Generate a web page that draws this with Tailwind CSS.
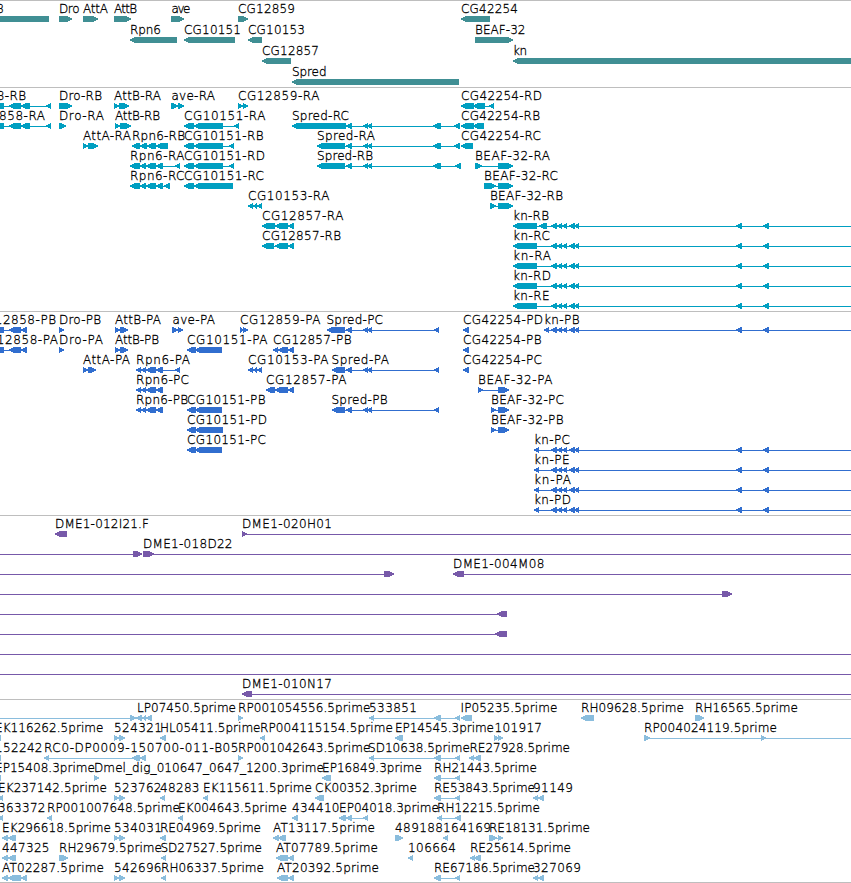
<!DOCTYPE html>
<html>
  <head>
    <title>Genome Browser</title>
    <meta charset="utf-8" />
    <meta name="viewport" content="width=device-width, initial-scale=1" />
    <script src="https://cdn.jsdelivr.net/npm/@tailwindcss/browser@4"></script>
  </head>
  <body class="bg-white overflow-hidden">
  <!-- Tracks -->
  <main class="flex flex-col w-[851px] font-['DejaVu_Sans_Light','DejaVu_Sans',sans-serif] font-extralight text-[12px] text-black border-b border-[#bebebe]">
    <section class="h-[87px] border-t border-[#bebebe]"><svg id="genes" class="block w-full h-full text-[#408f94]"></svg></section>
    <section class="h-[224px] border-t border-[#bebebe]"><svg id="transcripts" class="block w-full h-full text-[#009fc1]"></svg></section>
    <section class="h-[204px] border-t border-[#bebebe]"><svg id="proteins" class="block w-full h-full text-[#316ecf]"></svg></section>
    <section class="h-[184px] border-t border-[#bebebe]"><svg id="bacs" class="block w-full h-full text-[#7759a9]"></svg></section>
    <section class="h-[183px] border-t border-[#bebebe]"><svg id="ests" class="block w-full h-full text-[#8abddd]"></svg></section>
  </main>
  <script>
    // feature: [row, label, label start, label end, strand, "from-to" blocks]
    // a block ending in "~" is a plain connector
    const rd = "184-194 194-223 229-234";
    const spred = "346-352 363-368 367-372 433-441";
    const spredP = "346-352 363-368 367-372 434-439";
    const knTail = "551-557 557-562 562-567 569-575 574-579 736-742 763-769 769-860~";
    const est = "434-441 455-460";

    const genes = [
      [0, "CG12858", -52, 4, "<", "-30-49"],
      [0, "Dro", 59, 79.5, ">", "59-72"],
      [0, "AttA", 83, 108, ">", "83-98"],
      [0, "AttB", 114, 137, ">", "114-131"],
      [0, "ave", 171.5, 190.5, ">", "171-184"],
      [0, "CG12859", 238, 295, ">", "238-248"],
      [0, "CG42254", 461, 518, "<", "461-490"],
      [1, "Rpn6", 130, 161, "<", "130-177"],
      [1, "CG10151", 184, 241, "<", "184-235"],
      [1, "CG10153", 248, 305, "<", "248-262"],
      [1, "BEAF-32", 475, 525.5, ">", "475-513"],
      [2, "CG12857", 262, 319, "<", "262-291"],
      [2, "kn", 513, 527, "<", "513-860"],
      [3, "Spred", 292, 326.5, "<", "292-459"],
    ];

    const transcripts = [
      [0, "CG12858-RB", -54, 26, "<", "-9-4 9-21 21-30 46-51"],
      [0, "Dro-RB", 59, 102, ">", "59-72"],
      [0, "AttB-RA", 114, 161, ">", "114-119 119-129"],
      [0, "ave-RA", 171.5, 215, ">", "171-178 178-184"],
      [0, "CG12859-RA", 238, 319.5, ">", "238-243 243-248"],
      [0, "CG42254-RD", 461, 542, "<", "461-474 473-485 489-494"],
      [1, "CG12858-RA", -36, 45, "<", "-9-4 9-21 21-30 46-51"],
      [1, "Dro-RA", 59, 104, ">", "59-66"],
      [1, "AttB-RB", 115, 160, ">", "115-120 120-131"],
      [1, "CG10151-RA", 184, 265.5, "<", "184-194 194-223 234-239"],
      [1, "Spred-RC", 292, 349, "<", "292-346 " + spred + " 454-460"],
      [1, "CG42254-RB", 461, 540, "<", "461-474 473-484"],
      [2, "AttA-RA", 83, 131, ">", "83-88 88-98"],
      [2, "Rpn6-RB", 132, 185, "<", "132-140 140-147 147-156 156-168"],
      [2, "CG10151-RB", 184, 263.5, "<", rd],
      [2, "Spred-RA", 317, 375, "<", "317-345 " + spred + " 454-460"],
      [2, "CG42254-RC", 461, 541, "<", "461-473"],
      [3, "Rpn6-RA", 130, 184.5, "<", "130-140 140-146 146-156 156-163 175-180"],
      [3, "CG10151-RD", 184, 265, "<", rd],
      [3, "Spred-RB", 317, 373, "<", "317-345 " + spred + " 455-461"],
      [3, "BEAF-32-RA", 475, 550, ">", "475-482 498-513"],
      [4, "Rpn6-RC", 130, 184.5, "<", "130-140 140-146 146-156 156-163 164-170"],
      [4, "CG10151-RC", 184, 264, "<", "184-194 194-233"],
      [4, "BEAF-32-RC", 484, 558, ">", "484-496 498-513"],
      [5, "CG10153-RA", 248, 329.5, "<", "248-253 253-257 257-262"],
      [5, "BEAF-32-RB", 490, 563, ">", "490-496 498-513"],
      [6, "CG12857-RA", 262, 343.5, "<", "262-275 275-288 288-294"],
      [6, "kn-RB", 513, 549, "<", "513-537 539-547 " + knTail],
      [7, "CG12857-RB", 262, 341, "<", "262-274 275-288 288-294"],
      [7, "kn-RC", 513, 550, "<", "513-537 " + knTail],
      [8, "kn-RA", 513, 551, "<", "513-537 " + knTail],
      [9, "kn-RD", 513, 551, "<", "513-537 " + knTail],
      [10, "kn-RE", 513, 549.5, "<", "513-537 " + knTail],
    ];

    const proteins = [
      [0, "CG12858-PB", -24, 56, "<", "-9-4 9-21 21-27"],
      [0, "Dro-PB", 59, 101, ">", "59-64"],
      [0, "AttB-PA", 115, 161, ">", "115-120 120-128"],
      [0, "ave-PA", 172.5, 215, ">", "172-178 178-183"],
      [0, "CG12859-PA", 240, 320.5, ">", "240-244 243-248"],
      [0, "Spred-PC", 326.5, 383, "<", "327-345 " + spredP],
      [0, "CG42254-PD", 463, 543, "<", "463-469"],
      [0, "kn-PB", 544, 579.5, "<", "544-549 " + knTail],
      [1, "CG12858-PA", -22, 58, "<", "-9-4 9-21 21-27"],
      [1, "Dro-PA", 59, 103, ">", "59-64"],
      [1, "AttB-PB", 115, 159, ">", "115-120 120-128"],
      [1, "CG10151-PA", 187, 267.5, "<", "187-196 195-222"],
      [1, "CG12857-PB", 273, 351.5, "<", "273-278 278-288 288-294"],
      [1, "CG42254-PB", 463, 541.5, "<", "463-469"],
      [2, "AttA-PA", 83, 130, ">", "83-88 88-96"],
      [2, "Rpn6-PA", 136, 190, "<", "136-141 141-146 146-156 156-163 175-180"],
      [2, "CG10153-PA", 248, 328.5, "<", "248-253 253-257 257-262"],
      [2, "Spred-PA", 331.5, 389, "<", "332-345 " + spredP],
      [2, "CG42254-PC", 463, 542, "<", "463-469"],
      [3, "Rpn6-PC", 136, 189, "<", "136-141 141-146 146-156 156-163"],
      [3, "CG12857-PA", 266, 346.5, "<", "266-275 275-288 288-294"],
      [3, "BEAF-32-PA", 478, 552.5, ">", "478-483 498-509"],
      [4, "Rpn6-PB", 136, 188, "<", "136-141 141-146 146-156 156-163"],
      [4, "CG10151-PB", 187, 265.5, "<", "187-196 195-222"],
      [4, "Spred-PB", 331.5, 387.5, "<", "332-345 " + spredP],
      [4, "BEAF-32-PC", 491, 564, ">", "491-496 498-509"],
      [5, "CG10151-PD", 187, 267, "<", "187-196 195-223"],
      [5, "BEAF-32-PB", 491, 563.5, ">", "491-496 498-509"],
      [6, "CG10151-PC", 187, 266, "<", "187-196 195-222"],
      [6, "kn-PC", 534, 570, "<", "534-539 " + knTail],
      [7, "kn-PE", 534, 569.5, "<", "534-539 " + knTail],
      [8, "kn-PA", 534, 571, "<", "534-539 " + knTail],
      [9, "kn-PD", 534, 571, "<", "534-539 " + knTail],
    ];

    const bacs = [
      [0, "DME1-012I21.F", 55, 149, "<", "55-67"],
      [0, "DME1-020H01", 242, 332, ">", "242-247 247-860~"],
      [1, "", 0, 0, ">", "-9-133~ 133-142"],
      [1, "DME1-018D22", 143, 232.5, ">", "143-154 154-860~"],
      [2, "", 0, 0, ">", "-9-384~ 384-394"],
      [2, "DME1-004M08", 453, 544.5, "<", "453-464 464-860~"],
      [3, "", 0, 0, ">", "-9-722~ 722-732"],
      [4, "", 0, 0, "<", "-9-497~ 497-507"],
      [5, "", 0, 0, "<", "-9-495~ 495-507"],
      [6, "", 0, 0, ">", "-9-860~"],
      [7, "", 0, 0, ">", "-9-860~"],
      [8, "DME1-010N17", 242, 332, "<", "242-252 252-860~"],
    ];

    const ests = [
      [0, "", 0, 0, ">", "-9-130~ 130-136"],
      [0, "LP07450.5prime", 137, 236, "<", "136-142 142-146 146-152"],
      [0, "RP001054556.5prime", 238, 370.5, ">", "238-243"],
      [0, "533851", 369, 417, "<", "369-374 " + est],
      [0, "IP05235.5prime", 460.5, 557.5, "<", "461-472"],
      [0, "RH09628.5prime", 581, 684, "<", "581-594"],
      [0, "RH16565.5prime", 695, 798, ">", "695-704"],
      [1, "EK116262.5prime", -5, 103.5, "<", "-4-1"],
      [1, "524321", 114, 162, ">", "114-119 119-125"],
      [1, "HL05411.5prime", 160, 260.5, "<", "160-166"],
      [1, "RP004115154.5prime", 260, 393, "<", "260-265"],
      [1, "EP14545.3prime", 395, 494, "<", "395-403"],
      [1, "101917", 494.5, 542, ">", "494-499 498-503"],
      [1, "RP004024119.5prime", 644, 777, ">", "644-650 761-766 766-860~"],
      [2, "152242", -5, 42.5, "<", "-4-1"],
      [2, "RC0-DP0009-150700-011-B05", 44, 238.5, "<", "44-49 132-140 140-146"],
      [2, "RP001042643.5prime", 238, 370.5, ">", "238-243"],
      [2, "SD10638.5prime", 368, 470, "<", "369-374 " + est],
      [2, "RE27928.5prime", 469.5, 570, "<", "469-474 474-481"],
      [3, "EP15408.3prime", -5, 95, "<", "-4-1"],
      [3, "Dmel_dig_010647_0647_1200.3prime", 94, 324, ">", "94-99"],
      [3, "EP16849.3prime", 322, 422, "<", "322-331"],
      [3, "RH21443.5prime", 434, 537, "<", est],
      [4, "EK237142.5prime", -2, 107, "<", "-2-3"],
      [4, "523762", 114, 161.5, ">", "114-119 119-125"],
      [4, "48283", 160, 199.5, "<", "160-165"],
      [4, "EK115611.5prime", 203, 312, "<", "203-208"],
      [4, "CK00352.3prime", 315, 417, "<", "315-324"],
      [4, "RE53843.5prime", 434, 535, "<", est],
      [4, "91149", 533, 573, "<", "533-538 538-544"],
      [5, "363372", -2, 45.5, "<", "-2-3"],
      [5, "RP001007648.5prime", 47, 180, "<", "47-52"],
      [5, "EK004643.5prime", 178, 287, "<", "178-183"],
      [5, "434410", 292, 339.5, "<", "292-298"],
      [5, "EP04018.3prime", 339, 439, "<", "339-346 346-352 363-368"],
      [5, "RH12215.5prime", 437, 540, "<", "437-442 455-461"],
      [6, "EK296618.5prime", 2, 111, "<", "2-8 8-16"],
      [6, "534031", 114, 162, ">", "114-119 119-125"],
      [6, "RE04969.5prime", 160, 261, "<", "160-166"],
      [6, "AT13117.5prime", 273, 375, "<", "273-279 278-286"],
      [6, "489188", 395, 443, ">", "395-403"],
      [6, "164169", 443, 491, "<", "443-448"],
      [6, "RE18131.5prime", 489, 590, ">", "489-497 498-503"],
      [7, "447325", 2, 49.5, "<", "2-8 8-16"],
      [7, "RH29679.5prime", 59, 162, ">", "59-68"],
      [7, "SD27527.5prime", 160.5, 262, "<", "161-166"],
      [7, "AT07789.5prime", 276, 378, "<", "276-288 288-294"],
      [7, "106664", 408, 456, "<", "408-413"],
      [7, "RE25614.5prime", 470, 571, "<", "470-475 474-481"],
      [8, "AT02287.5prime", 2, 104, "<", "2-8 8-21 21-27"],
      [8, "542696", 114, 161.5, ">", "114-119 119-125"],
      [8, "RH06337.5prime", 161, 264, "<", "161-166"],
      [8, "AT20392.5prime", 277, 379, "<", "277-288 288-294"],
      [8, "RE67186.5prime", 434, 535, "<", est],
      [8, "327069", 533, 581, "<", "533-538 538-544"],
    ];

    function drawTrack(id, features, rowHeight) {
      let shapes = "";
      let labels = "";
      for (const [row, label, x1, x2, strand, blocks] of features) {
        const top = row * rowHeight + 15;
        const parts = blocks.split(" ").map((b) => b.match(/^(-?\d+)-(\d+)(~?)$/));
        const start = Number(parts[0][1]);
        const end = Number(parts[parts.length - 1][2]);
        if (parts.length > 1 || parts[0][3]) {
          shapes += `<rect x="${start + 1}" y="${top + 3}" width="${end - start - 2}" height="1" />`;
        }
        for (const p of parts) {
          if (p[3]) continue;
          const a = Number(p[1]);
          const b = Number(p[2]);
          const h = Math.min(5, b - a);
          const pts = strand == "<"
            ? [[a, 2.4], [a + 2, 1.3], [a + h, 0], [b, 0], [b, 6], [a + h, 6], [a + 2, 4.7], [a, 3.6]]
            : [[b, 2.4], [b - 2, 1.3], [b - h, 0], [a, 0], [a, 6], [b - h, 6], [b - 2, 4.7], [b, 3.6]];
          shapes += `<polygon points="${pts.map(([x, y]) => x + "," + (y + top)).join(" ")}" />`;
        }
        if (label) {
          labels += `<text x="${x1}" y="${top - 3}" textLength="${x2 - x1}">${label}</text>`;
        }
      }
      document.getElementById(id).innerHTML =
        `<g fill="currentColor" shape-rendering="crispEdges">${shapes}</g><g class="fill-black stroke-black stroke-[0.3px]">${labels}</g>`;
    }

    drawTrack("genes", genes, 21);
    drawTrack("transcripts", transcripts, 20);
    drawTrack("proteins", proteins, 20);
    drawTrack("bacs", bacs, 20);
    drawTrack("ests", ests, 20);
  </script>
  </body>
</html>
